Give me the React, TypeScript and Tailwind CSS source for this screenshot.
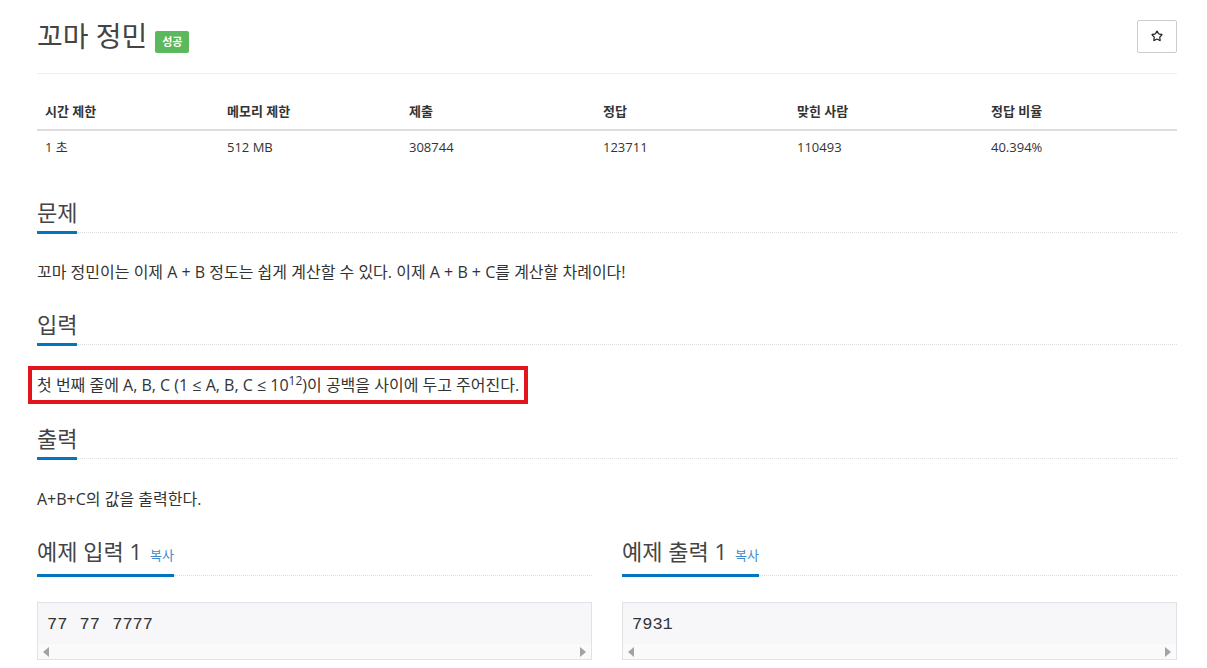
import { Star } from "lucide-react"

const sans = "font-['Open_Sans','Noto_Sans_CJK_KR',sans-serif]"

const stats = [
  { label: "시간 제한", value: "1 초", width: "w-[182px]" },
  { label: "메모리 제한", value: "512 MB", width: "w-[182px]" },
  { label: "제출", value: "308744", width: "w-[194px]" },
  { label: "정답", value: "123711", width: "w-[194px]" },
  { label: "맞힌 사람", value: "110493", width: "w-[194px]" },
  { label: "정답 비율", value: "40.394%", width: "w-[194px]" }
]

function SectionTitle({ children }: { children: React.ReactNode }) {
  return (
    <div className="flex items-end">
      <h2 className="border-b-[3px] border-[#0076c0] pb-[4px] text-[22px] leading-[30px] font-normal text-[#444]">
        {children}
      </h2>
      <div className="mb-[1px] flex-1 border-b border-dotted border-[#ddd]" />
    </div>
  )
}

function SampleBox({ text }: { text: string }) {
  return (
    <div className="mt-[25px] border border-[#e1e1e8] bg-[#f7f7f9]">
      <pre className="px-[9px] pt-[11px] pb-[8px] font-['Liberation_Mono',monospace] text-[17px] leading-[22px] text-[#333] [word-spacing:2px]">
        {text}
      </pre>
      <div className="flex h-[15px] items-center justify-between bg-[#fafafa] px-[5px]">
        <span className="h-0 w-0 border-y-[5px] border-r-[6px] border-y-transparent border-r-[#a3a3a3]" />
        <span className="h-0 w-0 border-y-[5px] border-l-[6px] border-y-transparent border-l-[#a3a3a3]" />
      </div>
    </div>
  )
}

function Sample({ title, text }: { title: string; text: string }) {
  return (
    <div>
      <SectionTitle>
        {title}
        <span className="ml-[8px] text-[13px] text-[#428bca]">복사</span>
      </SectionTitle>
      <SampleBox text={text} />
    </div>
  )
}

export default function App() {
  return (
    <div className={`${sans} min-h-[668px] bg-white pr-[30px] pl-[37px] text-[#333]`}>
      <div className="flex items-center justify-between border-b border-[#eee] pt-[19px] pb-[20px]">
        <div className="flex items-center">
          <h1 className="text-[28px] leading-[33px] font-normal text-[#444]">꼬마 정민</h1>
          <span className="mt-[12px] ml-[8px] flex h-[22px] w-[34px] items-center justify-center rounded-[2px] bg-[#5cb85c] text-[11px] font-bold text-white">
            성공
          </span>
        </div>
        <button
          type="button"
          className="flex h-[33px] w-[40px] items-center justify-center rounded-[2px] border border-[#ccc] bg-white"
        >
          <Star size={12} strokeWidth={2.4} className="text-[#222]" />
        </button>
      </div>

      <table className="mt-[19px] w-full border-collapse text-[13px]">
        <thead>
          <tr className="border-b-2 border-[#ddd]">
            {stats.map((s) => (
              <th key={s.label} className={`${s.width} px-[8px] py-[8px] text-left leading-[20px] font-bold`}>
                {s.label}
              </th>
            ))}
          </tr>
        </thead>
        <tbody>
          <tr>
            {stats.map((s) => (
              <td key={s.label} className="px-[8px] py-[6px] leading-[20px]">
                {s.value}
              </td>
            ))}
          </tr>
        </tbody>
      </table>

      <section className="mt-[34px]">
        <SectionTitle>문제</SectionTitle>
        <p className="mt-[26px] text-[16px] leading-[24px]">
          꼬마 정민이는 이제 A + B 정도는 쉽게 계산할 수 있다. 이제 A + B + C를 계산할 차례이다!
        </p>
      </section>

      <section className="mt-[25px]">
        <SectionTitle>입력</SectionTitle>
        <p className="mt-[20px] -ml-[9px] inline-block border-[4px] border-[#e3141c] px-[5px] py-[3px] text-[16px] leading-[24px]">
          첫 번째 줄에 A, B, C (1 ≤ A, B, C ≤ 10
          <sup className="text-[12px]">12</sup>)이 공백을 사이에 두고 주어진다.
        </p>
      </section>

      <section className="mt-[19px]">
        <SectionTitle>출력</SectionTitle>
        <p className="mt-[27px] text-[16px] leading-[24px]">A+B+C의 값을 출력한다.</p>
      </section>

      <div className="mt-[25px] grid grid-cols-2 gap-[30px]">
        <Sample title="예제 입력 1" text="77 77 7777" />
        <Sample title="예제 출력 1" text="7931" />
      </div>
    </div>
  )
}
